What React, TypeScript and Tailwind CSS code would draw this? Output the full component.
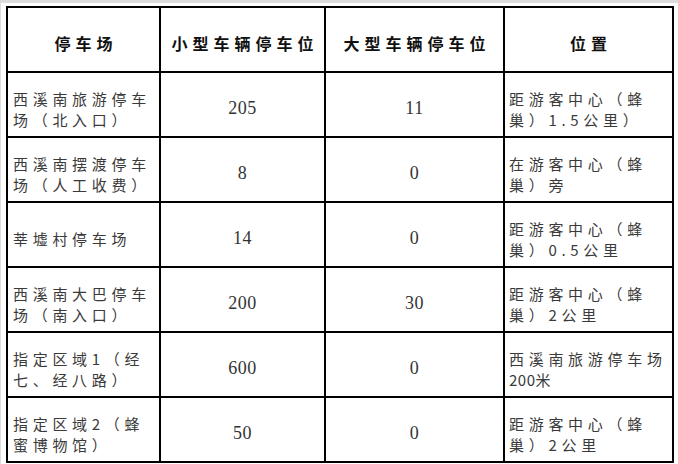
import type { ReactNode } from 'react';

const rows: { name: ReactNode[]; small: string; large: string; place: ReactNode[] }[] = [
  { name: ['西溪南旅游停车', '场（北入口）'], small: '205', large: '11', place: ['距游客中心（蜂', '巢）1.5公里）'] },
  { name: ['西溪南摆渡停车', '场（人工收费）'], small: '8', large: '0', place: ['在游客中心（蜂', '巢）旁'] },
  { name: ['莘墟村停车场'], small: '14', large: '0', place: ['距游客中心（蜂', '巢）0.5公里'] },
  { name: ['西溪南大巴停车', '场（南入口）'], small: '200', large: '30', place: ['距游客中心（蜂', '巢）2公里'] },
  {
    name: ['指定区域1（经', '七、经八路）'],
    small: '600',
    large: '0',
    place: ['西溪南旅游停车场', <><span className="tracking-[0.5px]">200</span>米</>],
  },
  { name: ['指定区域2（蜂', '蜜博物馆）'], small: '50', large: '0', place: ['距游客中心（蜂', '巢）2公里'] },
];

const cjk = { fontFamily: '"Noto Sans CJK SC", sans-serif' };
const serif = { fontFamily: '"Liberation Serif", "Noto Sans CJK SC", serif' };

function Lines({ lines }: { lines: ReactNode[] }) {
  return (
    <div className="text-[15px] leading-[21px] tracking-[4.7px] text-[#3a3a3a] whitespace-nowrap" style={cjk}>
      {lines.map((l, i) => (
        <div key={i}>{l}</div>
      ))}
    </div>
  );
}

export default function App() {
  const headers = ['停车场', '小型车辆停车位', '大型车辆停车位', '位置'];

  return (
    <div className="w-[678px] h-[464px] bg-white border-t-[3px] border-l border-[#dcdcdc] overflow-hidden">
      <table className="ml-[5px] mt-[3px] w-[666px] table-fixed border-collapse border-2 border-black">
        <colgroup>
          <col className="w-[153px]" />
          <col className="w-[165px]" />
          <col className="w-[179px]" />
          <col className="w-[169px]" />
        </colgroup>
        <thead>
          <tr className="h-[65px]">
            {headers.map((h) => (
              <th
                key={h}
                className="border-2 border-black pt-[7px] pb-0 text-center align-middle text-[16px] font-bold tracking-[5px] text-[#111] whitespace-nowrap"
                style={cjk}
              >
                <span className="mr-[-5px]">{h}</span>
              </th>
            ))}
          </tr>
        </thead>
        <tbody>
          {rows.map((r, i) => (
            <tr key={i} className="h-[65px]">
              <td className="border-2 border-black pl-[5px] pt-[8px] pb-0 align-middle">
                <Lines lines={r.name} />
              </td>
              <td
                className="border-2 border-black pt-[8px] pb-0 text-center align-middle text-[18px] tracking-[0.5px] text-[#333]"
                style={serif}
              >
                {r.small}
              </td>
              <td
                className="border-2 border-black pt-[8px] pb-0 text-center align-middle text-[18px] tracking-[0.5px] text-[#333]"
                style={serif}
              >
                {r.large}
              </td>
              <td className="border-2 border-black pl-[4px] pt-[8px] pb-0 align-middle">
                <Lines lines={r.place} />
              </td>
            </tr>
          ))}
        </tbody>
      </table>
    </div>
  );
}
